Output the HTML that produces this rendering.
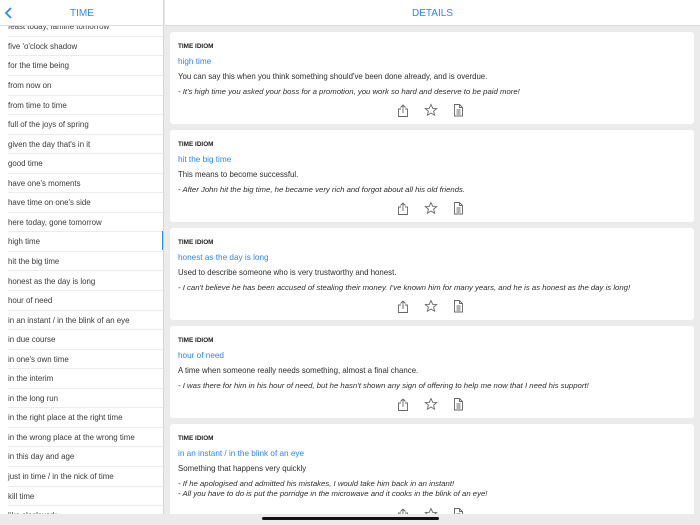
<!DOCTYPE html>
<html><head><meta charset="utf-8"><style>
*{margin:0;padding:0;box-sizing:border-box}
body{width:700px;height:525px;overflow:hidden;font-family:"Liberation Sans",sans-serif;background:#ebebeb;position:relative}
.left{position:absolute;left:0;top:0;width:164px;height:525px;background:#fff;overflow:hidden;border-right:1px solid #d6d6d6}
.hdr{position:absolute;top:0;height:26px;background:#fff;border-bottom:1px solid #dcdcdc;z-index:2;color:#2f86f6;font-size:10px;text-align:center;line-height:27px}
.row{position:absolute;left:8px;right:0;height:19.55px;border-bottom:1px solid #ececec;font-size:7.9px;color:#3a3a3a;line-height:19.55px;white-space:nowrap}
.sel{position:absolute;left:162px;width:2px;background:#2f86f6;top:231px;height:19px}
.card{position:absolute;left:170px;width:524px;height:92px;background:#fff;border-radius:3px;font-size:7.85px;color:#2e2e2e}
.card .k{position:absolute;left:8px;top:11px;font-size:6.4px;font-weight:bold;color:#222}
.card .t{position:absolute;left:8px;top:25px;color:#2f86f6;font-size:8.2px}
.card .d{position:absolute;left:8px;top:40px}
.card .e{position:absolute;left:8px;top:55px;font-style:italic;line-height:10px;white-space:nowrap;font-size:7.75px}
.ic{position:absolute;top:70px;left:227px}
.bot{position:absolute;left:0;top:514px;width:700px;height:11px;background:#ebebeb;z-index:5}
.home{position:absolute;left:262px;top:517px;width:177px;height:3px;background:#111;border-radius:2px;z-index:6}
</style></head><body>
<div class="left">
<div class="hdr" style="left:0;width:164px">TIME<svg style="position:absolute;left:4px;top:7px" width="9" height="12" viewBox="0 0 9 12"><path d="M7 1 L2 6 L7 11" stroke="#2f86f6" stroke-width="1.8" fill="none"/></svg></div>
<div class="row" style="top:17.3px">feast today, famine tomorrow</div>
<div class="row" style="top:36.9px">five 'o'clock shadow</div>
<div class="row" style="top:56.4px">for the time being</div>
<div class="row" style="top:76px">from now on</div>
<div class="row" style="top:95.5px">from time to time</div>
<div class="row" style="top:115px">full of the joys of spring</div>
<div class="row" style="top:134.6px">given the day that's in it</div>
<div class="row" style="top:154.2px">good time</div>
<div class="row" style="top:173.7px">have one's moments</div>
<div class="row" style="top:193.3px">have time on one's side</div>
<div class="row" style="top:212.8px">here today, gone tomorrow</div>
<div class="row" style="top:232.4px">high time</div>
<div class="row" style="top:251.9px">hit the big time</div>
<div class="row" style="top:271.5px">honest as the day is long</div>
<div class="row" style="top:291px">hour of need</div>
<div class="row" style="top:310.6px">in an instant / in the blink of an eye</div>
<div class="row" style="top:330.1px">in due course</div>
<div class="row" style="top:349.7px">in one's own time</div>
<div class="row" style="top:369.2px">in the interim</div>
<div class="row" style="top:388.8px">in the long run</div>
<div class="row" style="top:408.3px">in the right place at the right time</div>
<div class="row" style="top:427.9px">in the wrong place at the wrong time</div>
<div class="row" style="top:447.4px">in this day and age</div>
<div class="row" style="top:467px">just in time / in the nick of time</div>
<div class="row" style="top:486.5px">kill time</div>
<div class="row" style="top:506.1px">like clockwork</div>
<div class="sel"></div>
</div>
<div class="hdr" style="left:165px;width:535px">DETAILS</div>

<svg width="0" height="0" style="position:absolute"><defs>
<g id="icons" fill="none" stroke="#666" stroke-width="0.9">
<path d="M6 3 V11 M3.5 5.5 L6 3 L8.5 5.5 M4 7 H1.5 V14.5 H10.5 V7 H8"/>
<path d="M34 2.5 L35.7 6.3 L39.7 6.6 L36.6 9.2 L37.6 13.2 L34 11 L30.4 13.2 L31.4 9.2 L28.3 6.6 L32.3 6.3 Z"/>
<path d="M57.5 2.5 H62.5 L65.5 5.5 V14 H57.5 Z M62.5 2.5 V5.5 H65.5 M59.5 8 H63.5 M59.5 10 H63.5 M59.5 12 H63.5"/>
</g></defs></svg>

<div class="card" style="top:32px"><div class="k">TIME IDIOM</div><div class="t">high time</div><div class="d">You can say this when you think something should've been done already, and is overdue.</div><div class="e">- It's high time you asked your boss for a promotion, you work so hard and deserve to be paid more!</div><svg class="ic" width="70" height="16"><use href="#icons"/></svg></div>
<div class="card" style="top:130px"><div class="k">TIME IDIOM</div><div class="t">hit the big time</div><div class="d">This means to become successful.</div><div class="e">- After John hit the big time, he became very rich and forgot about all his old friends.</div><svg class="ic" width="70" height="16"><use href="#icons"/></svg></div>
<div class="card" style="top:228px"><div class="k">TIME IDIOM</div><div class="t">honest as the day is long</div><div class="d">Used to describe someone who is very trustworthy and honest.</div><div class="e">- I can't believe he has been accused of stealing their money. I've known him for many years, and he is as honest as the day is long!</div><svg class="ic" width="70" height="16"><use href="#icons"/></svg></div>
<div class="card" style="top:326px"><div class="k">TIME IDIOM</div><div class="t">hour of need</div><div class="d">A time when someone really needs something, almost a final chance.</div><div class="e">- I was there for him in his hour of need, but he hasn't shown any sign of offering to help me now that I need his support!</div><svg class="ic" width="70" height="16"><use href="#icons"/></svg></div>
<div class="card" style="top:424px;height:100px"><div class="k">TIME IDIOM</div><div class="t">in an instant / in the blink of an eye</div><div class="d">Something that happens very quickly</div><div class="e">- If he apologised and admitted his mistakes, I would take him back in an instant!<br>- All you have to do is put the porridge in the microwave and it cooks in the blink of an eye!</div><svg class="ic" style="top:82px" width="70" height="16"><use href="#icons"/></svg></div>
<div class="bot"></div>
<div class="home"></div>
</body></html>
